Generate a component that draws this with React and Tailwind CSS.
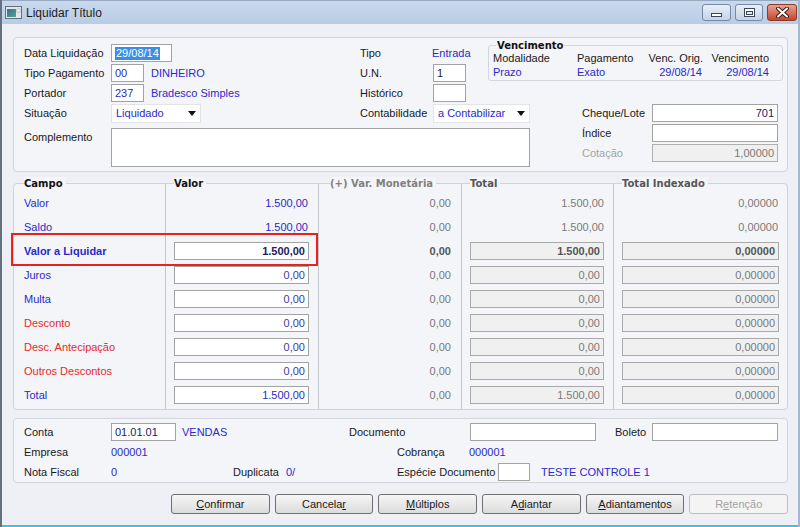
import React from 'react';

const BLUE = 'text-[#2a2ac8]';
const RED = 'text-[#e42a2a]';
const GRAY = 'text-[#7a7a7a]';

function Box({ w, className = '', children }) {
  return (
    <div className={`h-[18px] border border-[#a3a3a3] bg-white px-[3px] flex items-center ${w} ${className}`}>
      {children}
    </div>
  );
}

function Select({ w, text }) {
  return (
    <div className={`h-[19px] bg-white border border-[#e2e4e8] flex items-center justify-between pl-[4px] pr-[4px] ${w}`}>
      <span className={BLUE}>{text}</span>
      <svg width="8" height="5" viewBox="0 0 8 5"><path d="M0 0h8L4 5z" fill="#111" /></svg>
    </div>
  );
}

function TitleBar() {
  return (
    <div className="h-[24px] shrink-0 flex items-center pl-[3px] bg-linear-to-b from-[#c9d9ed] to-[#b8cce5] border-t border-[#97a9c0]">
      <svg width="17" height="13" viewBox="0 0 17 13">
        <defs>
          <linearGradient id="ic" x1="0" y1="0" x2="1" y2="1">
            <stop offset="0" stopColor="#3b6f93" />
            <stop offset="1" stopColor="#4fa592" />
          </linearGradient>
        </defs>
        <rect x="0.5" y="0.5" width="16" height="12" fill="#e4e8ee" stroke="#66707d" />
        <rect x="2" y="3" width="9" height="8" fill="url(#ic)" />
        <rect x="12" y="3" width="3" height="3" fill="#fff" stroke="#8a929c" strokeWidth="0.5" />
      </svg>
      <span className="ml-[4px] text-[12px] text-[#1c1c1c]">Liquidar Título</span>
      <div className="ml-auto mr-[1px] flex gap-[4px] self-start mt-[3px]">
        <div className="w-[29px] h-[17px] rounded-[3px] border border-[#7489a5] bg-linear-to-b from-[#e9eff7] to-[#c3d3e8] flex items-center justify-center">
          <div className="w-[11px] h-[4px] bg-white border border-[#3b4656] mt-[5px]" />
        </div>
        <div className="w-[28px] h-[17px] rounded-[3px] border border-[#7489a5] bg-linear-to-b from-[#e9eff7] to-[#c3d3e8] flex items-center justify-center">
          <div className="w-[11px] h-[9px] border border-[#3b4656] bg-white flex items-center justify-center">
            <div className="w-[7px] h-[4px] border border-[#3b4656] bg-[#e4e8ee]" />
          </div>
        </div>
        <div className="w-[30px] h-[17px] rounded-[3px] border border-[#8c3a29] bg-linear-to-b from-[#e7a08f] to-[#c5442b] flex items-center justify-center">
          <svg width="13" height="11" viewBox="0 0 13 11">
            <path d="M2 1.5l9 8M11 1.5l-9 8" stroke="#3a1a14" strokeWidth="4" strokeLinecap="round" />
            <path d="M2 1.5l9 8M11 1.5l-9 8" stroke="#fff" strokeWidth="2" strokeLinecap="round" />
          </svg>
        </div>
      </div>
    </div>
  );
}

function Row({ className = '', children }) {
  return <div className={`h-[20px] flex items-center ${className}`}>{children}</div>;
}

function Panel1() {
  return (
    <div className="mt-[13px] h-[135px] shrink-0 border border-[#d3d6dc] rounded-[4px] bg-[#f4f5f9] pt-[5px] pl-[10px] flex flex-col">
      <div className="flex h-[60px]">
        <div className="w-[336px] flex flex-col">
          <Row>
            <span className="w-[87px]">Data Liquidação</span>
            <Box w="w-[61px]" className="px-[2px]">
              <span className="bg-[#3a8ee6] text-white px-[1px] leading-[13px]">29/08/14</span>
            </Box>
          </Row>
          <Row>
            <span className="w-[87px]">Tipo Pagamento</span>
            <Box w="w-[33px]"><span className={BLUE}>00</span></Box>
            <span className={`ml-[7px] ${BLUE}`}>DINHEIRO</span>
          </Row>
          <Row>
            <span className="w-[87px]">Portador</span>
            <Box w="w-[33px]"><span className={BLUE}>237</span></Box>
            <span className={`ml-[7px] ${BLUE}`}>Bradesco Simples</span>
          </Row>
        </div>
        <div className="w-[128px] flex flex-col">
          <Row>
            <span className="w-[72px]">Tipo</span>
            <span className={BLUE}>Entrada</span>
          </Row>
          <Row>
            <span className="w-[73px]">U.N.</span>
            <Box w="w-[33px]">1</Box>
          </Row>
          <Row>
            <span className="w-[73px]">Histórico</span>
            <Box w="w-[33px]" />
          </Row>
        </div>
        <fieldset className="w-[295px] self-start -mt-[4px] border border-[#d3d6dc] rounded-[3px] pl-[4px] pb-[1px]">
          <legend className="ml-[3px] px-[1px] h-[13px] leading-[13px] [font-family:'DejaVu_Sans',sans-serif] font-bold text-[10px] text-[#111]">
            Vencimento
          </legend>
          <div className="h-[13px] flex items-center">
            <span className="w-[84px]">Modalidade</span>
            <span className="w-[64px]">Pagamento</span>
            <span className="w-[62px] text-right">Venc. Orig.</span>
            <span className="w-[60px] ml-[6px] text-right">Vencimento</span>
          </div>
          <div className={`h-[14px] flex items-center ${BLUE}`}>
            <span className="w-[84px]">Prazo</span>
            <span className="w-[64px]">Exato</span>
            <span className="w-[61px] text-right">29/08/14</span>
            <span className="w-[61px] ml-[6px] text-right">29/08/14</span>
          </div>
        </fieldset>
      </div>
      <div className="flex">
        <div className="w-[558px] flex flex-col">
          <Row>
            <span className="w-[87px]">Situação</span>
            <Select w="w-[90px]" text="Liquidado" />
            <span className="ml-[159px] w-[73px]">Contabilidade</span>
            <Select w="w-[97px]" text="a Contabilizar" />
          </Row>
          <div className="mt-[5px] flex">
            <span className="w-[87px] pt-[4px]">Complemento</span>
            <div className="w-[419px] h-[39px] border border-[#a3a3a3] bg-white" />
          </div>
        </div>
        <div className="flex flex-col">
          <Row>
            <span className="w-[70px]">Cheque/Lote</span>
            <Box w="w-[126px]" className="justify-end"><span className="text-[#20206a]">701</span></Box>
          </Row>
          <Row>
            <span className="w-[70px]">Índice</span>
            <Box w="w-[126px]" />
          </Row>
          <Row>
            <span className={`w-[70px] text-[#a3a3a3]`}>Cotação</span>
            <Box w="w-[126px]" className="justify-end !bg-[#f0f0f0] border-[#b0b0b0]">
              <span className="text-[#7a7a7a]">1,00000</span>
            </Box>
          </Row>
        </div>
      </div>
    </div>
  );
}

const rows = [
  { label: 'Valor', color: BLUE, plain: true, valor: '1.500,00', total: '1.500,00' },
  { label: 'Saldo', color: BLUE, plain: true, valor: '1.500,00', total: '1.500,00' },
  { label: 'Valor a Liquidar', color: BLUE, bold: true, valor: '1.500,00', total: '1.500,00' },
  { label: 'Juros', color: BLUE, valor: '0,00', total: '0,00' },
  { label: 'Multa', color: BLUE, valor: '0,00', total: '0,00' },
  { label: 'Desconto', color: RED, valor: '0,00', total: '0,00' },
  { label: 'Desc. Antecipação', color: RED, valor: '0,00', total: '0,00' },
  { label: 'Outros Descontos', color: RED, valor: '0,00', total: '0,00' },
  { label: 'Total', color: BLUE, valor: '1.500,00', total: '1.500,00', blueVal: true },
];

function Col({ w, first, header, headerCls, pl, children }) {
  return (
    <div className={`${w} flex flex-col ${first ? '' : 'border-l border-[#c5c8ce]'}`}>
      <div className={`-mt-[8px] h-[15px] flex items-center ${pl}`}>
        <span className={`bg-[#f4f5f9] pr-[3px] leading-[14px] [font-family:'DejaVu_Sans',sans-serif] font-bold text-[10px] ${headerCls}`}>
          {header}
        </span>
      </div>
      {children}
    </div>
  );
}

function Cell({ className = '', children }) {
  return <div className={`h-[24px] flex items-center ${className}`}>{children}</div>;
}

function Panel2() {
  return (
    <div className="relative mt-[11px] h-[227px] shrink-0 border border-[#cfd2d8] rounded-[4px] bg-[#f4f5f9] flex">
      <Col w="w-[151px]" first header="Campo" headerCls="text-[#111]" pl="pl-[10px]">
        {rows.map((r) => (
          <Cell key={r.label} className="pl-[10px]">
            <span className={`${r.color} ${r.bold ? 'font-bold' : ''}`}>{r.label}</span>
          </Cell>
        ))}
      </Col>
      <Col w="w-[153px]" header="Valor" headerCls="text-[#111]" pl="pl-[8px]">
        {rows.map((r) => (
          <Cell key={r.label} className="pl-[8px]">
            {r.plain ? (
              <span className={`w-[135px] text-right pr-[1px] ${BLUE}`}>{r.valor}</span>
            ) : (
              <Box w="w-[135px]" className="justify-end">
                <span className={r.bold ? 'font-bold text-[#1c1c5e]' : r.blueVal ? BLUE : 'text-[#3a3aa6]'}>{r.valor}</span>
              </Box>
            )}
          </Cell>
        ))}
      </Col>
      <Col w="w-[143px]" header="(+) Var. Monetária" headerCls="text-[#808080]" pl="pl-[11px]">
        {rows.map((r) => (
          <Cell key={r.label} className="justify-end pr-[10px]">
            <span className={r.bold ? 'font-bold text-[#555]' : GRAY}>0,00</span>
          </Cell>
        ))}
      </Col>
      <Col w="w-[152px]" header="Total" headerCls="text-[#555]" pl="pl-[8px]">
        {rows.map((r) => (
          <Cell key={r.label} className="pl-[8px]">
            {r.plain ? (
              <span className={`w-[134px] text-right ${GRAY}`}>{r.total}</span>
            ) : (
              <Box w="w-[134px]" className="justify-end !bg-[#f0f0f0] border-[#a9a9a9]">
                <span className={r.bold ? 'font-bold text-[#555]' : GRAY}>{r.total}</span>
              </Box>
            )}
          </Cell>
        ))}
      </Col>
      <Col w="w-[174px]" header="Total Indexado" headerCls="text-[#555]" pl="pl-[8px]">
        {rows.map((r) => (
          <Cell key={r.label} className="pl-[8px]">
            {r.plain ? (
              <span className={`w-[157px] text-right pr-[1px] ${GRAY}`}>0,00000</span>
            ) : (
              <Box w="w-[157px]" className="justify-end !bg-[#f0f0f0] border-[#a9a9a9]">
                <span className={r.bold ? 'font-bold text-[#555]' : GRAY}>0,00000</span>
              </Box>
            )}
          </Cell>
        ))}
      </Col>
      <div className="absolute left-[-3px] top-[49px] w-[307px] h-[33px] border-2 border-[#e8231f]" />
    </div>
  );
}

function Panel3() {
  return (
    <div className="mt-[8px] h-[65px] shrink-0 border border-[#d3d6dc] rounded-[4px] bg-[#f4f5f9] pt-[3px] pl-[10px] flex flex-col">
      <Row>
        <span className="w-[87px]">Conta</span>
        <Box w="w-[65px]"><span className="text-[#20206a]">01.01.01</span></Box>
        <span className={`ml-[6px] w-[167px] ${BLUE}`}>VENDAS</span>
        <span className="w-[121px]">Documento</span>
        <Box w="w-[126px]" />
        <span className="ml-[19px] w-[37px]">Boleto</span>
        <Box w="w-[126px]" />
      </Row>
      <Row>
        <span className="w-[87px]">Empresa</span>
        <span className={`w-[286px] ${BLUE}`}>000001</span>
        <span className="w-[72px]">Cobrança</span>
        <span className={BLUE}>000001</span>
      </Row>
      <Row>
        <span className="w-[87px]">Nota Fiscal</span>
        <span className={`w-[122px] ${BLUE}`}>0</span>
        <span className="w-[53px]">Duplicata</span>
        <span className={`w-[111px] ${BLUE}`}>0/</span>
        <span className="w-[101px]">Espécie Documento</span>
        <Box w="w-[32px]" />
        <span className={`ml-[11px] ${BLUE}`}>TESTE CONTROLE 1</span>
      </Row>
    </div>
  );
}

function Btn({ children, disabled }) {
  return (
    <div
      className={`w-[99px] h-[20px] rounded-[3px] border flex items-center justify-center ${
        disabled
          ? 'border-[#b9bcc0] bg-[#f4f4f4] text-[#a3a3a3]'
          : 'border-[#707070] bg-linear-to-b from-[#f6f6f6] to-[#dcdcdc] text-[#1a1a1a]'
      }`}
    >
      {children}
    </div>
  );
}

function Buttons() {
  return (
    <div className="mt-[11px] flex gap-[5px] pl-[158px]">
      <Btn><u>C</u>onfirmar</Btn>
      <Btn>Cancela<u>r</u></Btn>
      <Btn><u>M</u>últiplos</Btn>
      <Btn>A<u>d</u>iantar</Btn>
      <Btn><u>A</u>diantamentos</Btn>
      <Btn disabled>R<u>e</u>tenção</Btn>
    </div>
  );
}

export default function App() {
  return (
    <div className="w-[800px] h-[527px] flex flex-col overflow-hidden whitespace-nowrap border-l-2 border-l-[#66717f] border-r-2 border-r-[#a4b8d1] [font-family:'Liberation_Sans',Arial,sans-serif] text-[11px] text-[#1a1a1a] leading-none">
      <TitleBar />
      <div className="flex-1 flex flex-col bg-[#eef0f5] border-b-2 border-b-[#3cc4e4] pl-[11px] pr-[10px]">
        <Panel1 />
        <Panel2 />
        <Panel3 />
        <Buttons />
      </div>
    </div>
  );
}
